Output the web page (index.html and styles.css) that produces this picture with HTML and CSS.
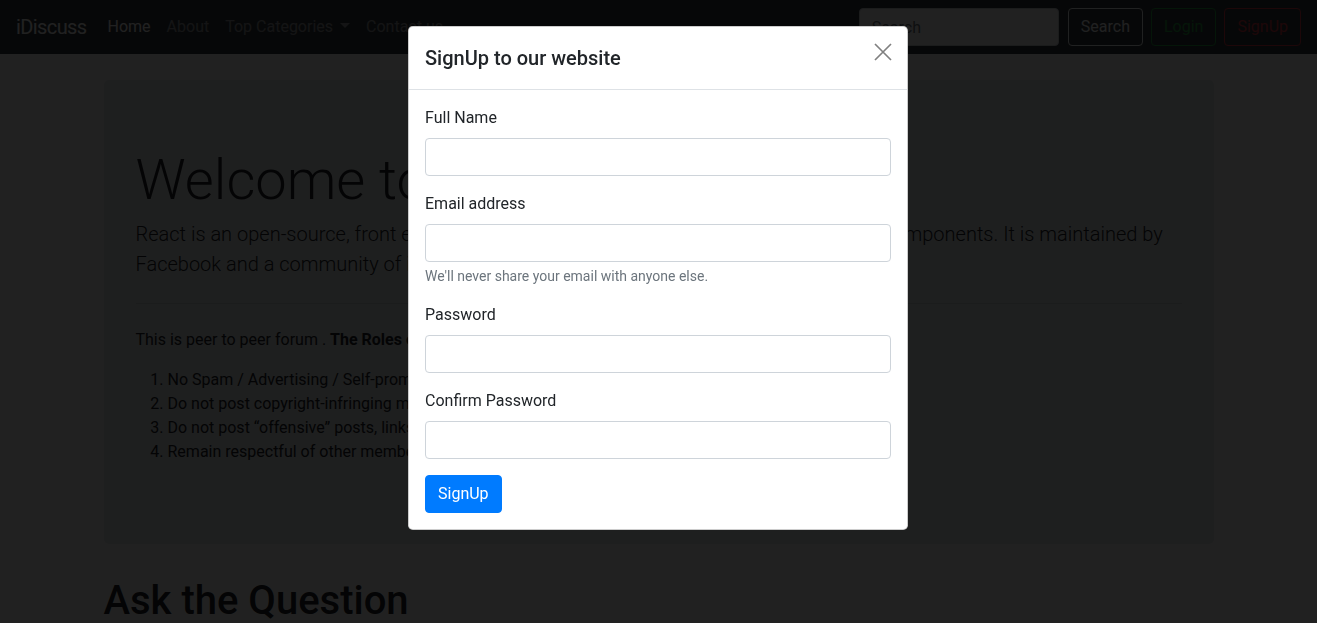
FILE: index.html
```html
<!DOCTYPE html>
<html lang="en">
<head>
<meta charset="utf-8">
<title>iDiscuss - Coding Forums</title>
<link rel="stylesheet" href="styles.css">
</head>
<body>
<nav class="navbar">
  <a class="brand" href="#">iDiscuss</a>
  <ul class="nav">
    <li><a class="nav-link active" href="#">Home</a></li>
    <li><a class="nav-link" href="#">About</a></li>
    <li><a class="nav-link" href="#">Top Categories <span class="caret"></span></a></li>
    <li><a class="nav-link" href="#">Contact us</a></li>
  </ul>
  <form class="nav-form">
    <input class="search-input" type="search" placeholder="Search">
    <button class="btn btn-outline-light" type="button">Search</button>
  </form>
  <button class="btn btn-outline-success nav-btn" type="button">Login</button>
  <button class="btn btn-outline-danger nav-btn" type="button">SignUp</button>
</nav>

<div class="container">
  <div class="jumbotron">
    <h1 class="display-4">Welcome to iDiscuss Forums</h1>
    <p class="lead">React is an open-source, front end, JavaScript library for building user interfaces or UI components. It is maintained by Facebook and a community of individual developers and companies.</p>
    <hr class="divider">
    <p class="rules-intro">This is peer to peer forum . <b>The Roles of this forum are as follows.</b></p>
    <ol class="rules">
      <li>No Spam / Advertising / Self-promote in the forums.</li>
      <li>Do not post copyright-infringing material.</li>
      <li>Do not post “offensive” posts, links or images.</li>
      <li>Remain respectful of other members at all times.</li>
    </ol>
  </div>
</div>

<div class="container questions">
  <h1 class="section-title">Ask the Question</h1>
</div>

<div class="backdrop"></div>

<div class="modal">
  <div class="modal-dialog">
    <div class="modal-content">
      <div class="modal-header">
        <h5 class="modal-title">SignUp to our website</h5>
        <button class="close" type="button" aria-label="Close">
          <svg width="18" height="18" viewBox="0 0 18 18"><path d="M1 1 L17 17 M17 1 L1 17" stroke="#808080" stroke-width="1.7" fill="none"/></svg>
        </button>
      </div>
      <form class="modal-body">
        <div class="form-group">
          <label class="form-label">Full Name</label>
          <input class="form-control" type="text">
        </div>
        <div class="form-group">
          <label class="form-label">Email address</label>
          <input class="form-control" type="email">
          <small class="form-text">We'll never share your email with anyone else.</small>
        </div>
        <div class="form-group">
          <label class="form-label">Password</label>
          <input class="form-control" type="password">
        </div>
        <div class="form-group">
          <label class="form-label">Confirm Password</label>
          <input class="form-control" type="password">
        </div>
        <button class="btn btn-primary" type="button">SignUp</button>
      </form>
    </div>
  </div>
</div>
</body>
</html>
```

FILE: styles.css
```css
html, body {
  margin: 0;
  height: 623px;
  overflow: hidden;
}
body {
  font-family: Roboto, "Liberation Sans", sans-serif;
  font-size: 16px;
  line-height: 1.5;
  color: #212529;
  background: #fff;
}
a { text-decoration: none; }

/* navbar */
.navbar {
  display: flex;
  align-items: center;
  padding: 8px 16px;
  background: #343a40;
}
.brand {
  font-size: 20px;
  line-height: 30px;
  letter-spacing: -0.6px;
  padding: 4px 0;
  margin-right: 13px;
  color: #fff;
}
.nav {
  display: flex;
  list-style: none;
  margin: 0 auto 0 0;
  padding: 0;
}
.nav-link {
  display: block;
  padding: 7px 8px;
  color: rgba(255,255,255,.5);
}
.nav-link.active { color: #fff; }
.caret {
  display: inline-block;
  margin-left: 3px;
  vertical-align: 4px;
  border-top: 5px solid;
  border-left: 5px solid transparent;
  border-right: 5px solid transparent;
}
.nav-form {
  display: flex;
  align-items: center;
  margin: 0;
}
.search-input {
  box-sizing: border-box;
  width: 200px;
  height: 38px;
  padding: 6px 12px;
  font: inherit;
  color: #495057;
  background: #fff;
  border: 1px solid #ced4da;
  border-radius: 4px;
  margin-right: 9px;
}
.search-input::placeholder { color: #6c757d; }

.btn {
  display: inline-block;
  font: inherit;
  line-height: 24px;
  padding: 6px 12px;
  border: 1px solid transparent;
  border-radius: 4px;
  background: transparent;
  cursor: pointer;
}
.btn-outline-light { color: #f8f9fa; border-color: #f8f9fa; }
.btn-outline-success { color: #28a745; border-color: #28a745; }
.btn-outline-danger { color: #dc3545; border-color: #dc3545; }
.nav-btn { margin-left: 8px; }
.btn-primary { color: #fff; background: #007bff; border-color: #007bff; }

/* content */
.container {
  width: 1140px;
  box-sizing: border-box;
  padding: 0 15px;
  margin: 0 auto;
}
.jumbotron {
  margin: 26px 0 24px;
  padding: 64px 32px;
  background: #e9ecef;
  border-radius: 4.8px;
}
.display-4 {
  font-size: 56px;
  font-weight: 300;
  line-height: 1.2;
  margin: 0 0 8px;
  position: relative;
  top: 3px;
}
.lead {
  font-size: 20px;
  font-weight: 300;
  margin: 0 0 16px;
}
.divider {
  margin: 24px 0;
  border: 0;
  border-top: 1px solid rgba(0,0,0,.1);
}
.rules-intro { margin: 0 0 16px; }
.rules {
  margin: 0 0 16px;
  padding-left: 32px;
}
.questions { padding-top: 9px; }
.section-title {
  font-size: 40px;
  font-weight: 500;
  line-height: 1.2;
  margin: 0;
}

/* modal */
.backdrop {
  position: fixed;
  inset: 0;
  background: #000;
  opacity: .87;
}
.modal {
  position: fixed;
  inset: 0;
  padding-right: 1px;
}
.modal-dialog {
  width: 500px;
  margin: 26px auto 0;
}
.modal-content {
  background: #fff;
  border: 1px solid rgba(0,0,0,.2);
  border-radius: 4.8px;
}
.modal-header {
  display: flex;
  align-items: flex-start;
  justify-content: space-between;
  padding: 16px;
  border-bottom: 1px solid #dee2e6;
}
.modal-title {
  margin: 0;
  font-size: 20px;
  font-weight: 500;
  line-height: 30px;
}
.close {
  border: 0;
  background: transparent;
  padding: 0;
  margin: -1px -2px 0 0;
  width: 20px;
  height: 20px;
  display: flex;
  align-items: center;
  justify-content: center;
  cursor: pointer;
}
.modal-body {
  display: block;
  padding: 16px;
  margin: 0;
}
.form-group { margin-bottom: 16px; }
.form-label {
  display: inline-block;
  margin-bottom: 8px;
}
.form-control {
  display: block;
  box-sizing: border-box;
  width: 100%;
  height: 38px;
  padding: 6px 12px;
  font: inherit;
  border: 1px solid #ced4da;
  border-radius: 4px;
  background: #fff;
}
.form-text {
  display: block;
  margin-top: 4px;
  font-size: 14px;
  line-height: 21px;
  color: #6c757d;
}
```
